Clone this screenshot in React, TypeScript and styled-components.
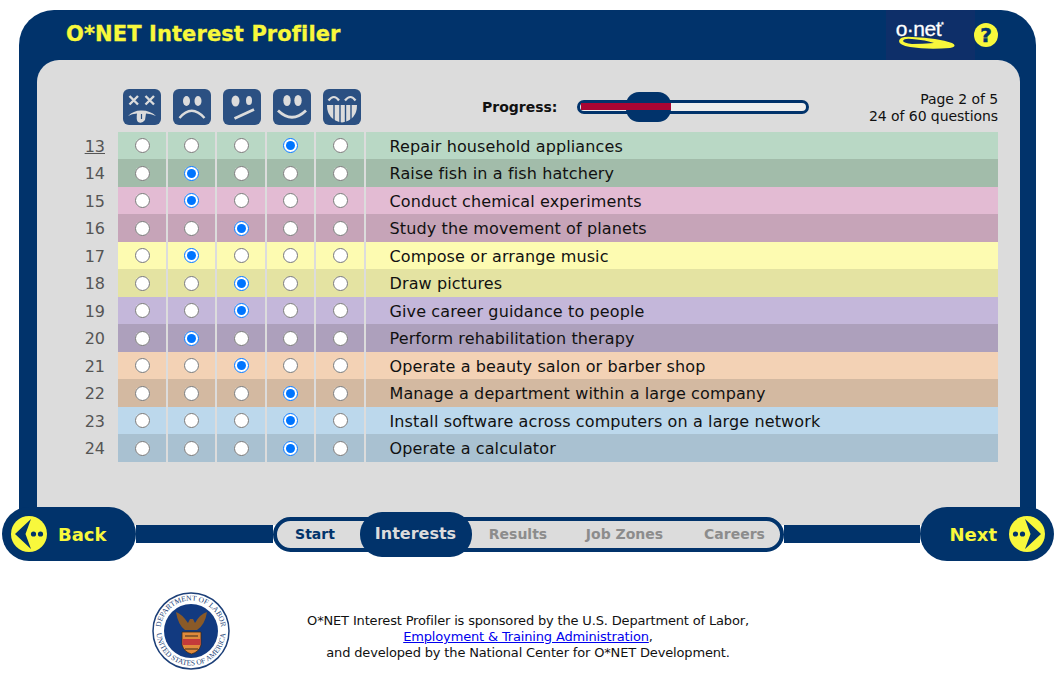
import styled, { createGlobalStyle } from "styled-components"

const NAVY = "#01336b"
const YELLOW = "#f8f83c"
const GREY = "#dcdcdc"
const ICON_BLUE = "#2b5082"

interface Question {
    num: number
    text: string
    color: string
    answer: number
}

const QUESTIONS: Question[] = [
    { num: 13, text: "Repair household appliances", color: "#b9d8c5", answer: 3 },
    { num: 14, text: "Raise fish in a fish hatchery", color: "#a2bcaa", answer: 1 },
    { num: 15, text: "Conduct chemical experiments", color: "#e3bbd3", answer: 1 },
    { num: 16, text: "Study the movement of planets", color: "#c6a4b8", answer: 2 },
    { num: 17, text: "Compose or arrange music", color: "#fdfbb1", answer: 1 },
    { num: 18, text: "Draw pictures", color: "#e4e3a2", answer: 2 },
    { num: 19, text: "Give career guidance to people", color: "#c4b7da", answer: 2 },
    { num: 20, text: "Perform rehabilitation therapy", color: "#ada0bc", answer: 1 },
    { num: 21, text: "Operate a beauty salon or barber shop", color: "#f3d2b5", answer: 2 },
    { num: 22, text: "Manage a department within a large company", color: "#d3b9a1", answer: 3 },
    { num: 23, text: "Install software across computers on a large network", color: "#bcd8ec", answer: 3 },
    { num: 24, text: "Operate a calculator", color: "#a9c1d1", answer: 3 },
]

const GlobalStyle = createGlobalStyle`
    body {
        margin: 0;
        background: #fff;
        font-family: "DejaVu Sans", Verdana, sans-serif;
    }
`

const FaceIcon = ({ kind }: { kind: number }) => (
    <svg width="38" height="36" viewBox="0 0 38 36">
        <rect width="38" height="36" rx="6" fill={ICON_BLUE} />
        <g fill={GREY} stroke="none">
            {kind === 0 && (
                <>
                    <path d="M6.500 7l8.500 8.500M15 7l-8.500 8.500M22.500 7l8.500 8.500M31 7l-8.500 8.500" stroke={GREY} strokeWidth="2.400" fill="none" />
                    <path d="M5 27Q11 21 19 21.500Q27 21.500 33 27Q28 24.500 23 24.500L22 31Q19 35 15 33Q13 31 14 24.500Q9 24.500 5 27Z" />
                    <path d="M18.500 25V30" stroke={ICON_BLUE} strokeWidth="1.200" />
                </>
            )}
            {kind === 1 && (
                <>
                    <ellipse cx="13.500" cy="12" rx="3.500" ry="5" />
                    <ellipse cx="25" cy="12" rx="3.500" ry="5" />
                    <path d="M6.500 29Q18.500 14.500 31.500 29" stroke={GREY} strokeWidth="2.400" fill="none" />
                </>
            )}
            {kind === 2 && (
                <>
                    <ellipse cx="12.500" cy="12" rx="4" ry="5.500" />
                    <ellipse cx="26" cy="11.500" rx="3" ry="4.500" />
                    <path d="M11.500 29.500L31 20.500" stroke={GREY} strokeWidth="2.800" fill="none" />
                </>
            )}
            {kind === 3 && (
                <>
                    <ellipse cx="14" cy="11.500" rx="3.700" ry="5.500" />
                    <ellipse cx="25" cy="11.500" rx="3.700" ry="5.500" />
                    <path d="M5 21.500Q19 35 33 21.500" stroke={GREY} strokeWidth="2.800" fill="none" />
                </>
            )}
            {kind === 4 && (
                <>
                    <path d="M5.500 11.500Q11 4.500 16 11.500M22 11.500Q27.500 4.500 32.500 11.500" stroke={GREY} strokeWidth="2.200" fill="none" />
                    <path d="M4 16H34Q34 31 19 33.500Q4 31 4 16Z" />
                    <path d="M11 15V33M17 15V34.500M22.500 15V34.500M28 15V33" stroke={ICON_BLUE} strokeWidth="1.400" fill="none" />
                </>
            )}
        </g>
    </svg>
)

const ArrowIcon = ({ flip }: { flip?: boolean }) => (
    <svg width="36" height="36" viewBox="0 0 36 36">
        <g transform={flip ? "matrix(-1 0 0 1 36 0)" : undefined}>
            <circle cx="18" cy="18" r="18" fill={YELLOW} />
            <path d="M4 18L20 3L14.500 18L20 33Z" fill={NAVY} />
            <circle cx="22.500" cy="18" r="2.600" fill={NAVY} />
            <circle cx="29.500" cy="18" r="2.600" fill={NAVY} />
        </g>
    </svg>
)

const Seal = () => (
    <svg width="78" height="78" viewBox="0 0 78 78">
        <defs>
            <path id="sealTop" d="M8.500 39a30.500 30.500 0 0 1 61 0" />
            <path id="sealBottom" d="M4.500 39a34.500 34.500 0 0 0 69 0" />
        </defs>
        <circle cx="39" cy="39" r="38" fill="#fff" stroke="#1c3f78" strokeWidth="1.500" />
        <circle cx="39" cy="39" r="27" fill="#123a80" />
        <text fontFamily="Liberation Serif, serif" fontSize="7.500" fill="#1c3f78" textAnchor="middle">
            <textPath href="#sealTop" startOffset="50%">DEPARTMENT OF LABOR</textPath>
        </text>
        <text fontFamily="Liberation Serif, serif" fontSize="7.500" fill="#1c3f78" textAnchor="middle">
            <textPath href="#sealBottom" startOffset="50%">UNITED STATES OF AMERICA</textPath>
        </text>
        <path d="M24 20Q30 22 36 31L38 27L41 27L43 31Q48 22 55 20Q53 33 45 38H33Q26 33 24 20Z" fill="#8a5a28" />
        <path d="M30 40H49V53Q47 60 39.500 62Q32 60 30 53Z" fill="#e08a3c" stroke="#3a2a1a" strokeWidth="0.800" />
        <rect x="30.500" y="47" width="18" height="6" fill="#c43a3a" />
        <path d="M33 44H46M33 57H46" stroke="#3a2a1a" strokeWidth="1.200" />
    </svg>
)

const App = () => (
    <Page>
        <GlobalStyle />
        <Frame>
            <Header>
                <Title>O*NET Interest Profiler</Title>
                <LogoBlock>
                    <LogoText>o·net<sup>*</sup></LogoText>
                    <Swoosh width="60" height="13" viewBox="0 0 60 13">
                        <path
                            fillRule="evenodd"
                            d="M1 5Q2 0 14 1Q40 2 54 7Q60 10 52 12Q30 14 12 11Q1 9 1 5ZM5 5Q6 7 14 8Q24 8 36 7Q28 4 14 3Q6 2 5 5Z"
                            fill={YELLOW}
                        />
                    </Swoosh>
                </LogoBlock>
                <HelpBlock>
                    <HelpCircle>?</HelpCircle>
                </HelpBlock>
            </Header>
            <Panel>
                <TopRow>
                    <Faces>
                        {[0, 1, 2, 3, 4].map((k) => <FaceIcon key={k} kind={k} />)}
                    </Faces>
                    <ProgressLabel>Progress:</ProgressLabel>
                    <Track>
                        <Fill />
                        <Knob />
                    </Track>
                    <PageInfo>
                        Page 2 of 5<br />
                        24 of 60 questions
                    </PageInfo>
                </TopRow>
                <Questions>
                    {QUESTIONS.map((q) => (
                        <Row key={q.num}>
                            <Num $link={q.num === 13}>{q.num}</Num>
                            {[0, 1, 2, 3, 4].map((i) => (
                                <RadioCell key={i} style={{ background: q.color }}>
                                    <Radio type="radio" name={`q${q.num}`} defaultChecked={q.answer === i} />
                                </RadioCell>
                            ))}
                            <TextCell style={{ background: q.color }}>{q.text}</TextCell>
                        </Row>
                    ))}
                </Questions>
            </Panel>
            <BottomRow>
                <NavPill>
                    <ArrowIcon />
                    <NavLabel>Back</NavLabel>
                </NavPill>
                <Band />
                <Tabs>
                    <Tab $width={83} $color={NAVY} $pad="0 6px 0 0">Start</Tab>
                    <ActiveTab>Interests</ActiveTab>
                    <Tab $width={93} $color="#8c8c8c">Results</Tab>
                    <Tab $width={120} $color="#8c8c8c">Job Zones</Tab>
                    <Tab $width={95} $color="#8c8c8c" $pad="0 0 0 5px">Careers</Tab>
                </Tabs>
                <Band />
                <NextPill>
                    <NavLabel>Next</NavLabel>
                    <ArrowIcon flip />
                </NextPill>
            </BottomRow>
        </Frame>
        <Footer>
            <Seal />
            <Sponsor>
                O*NET Interest Profiler is sponsored by the U.S. Department of Labor,<br />
                <a href="#eta">Employment &amp; Training Administration</a>,<br />
                and developed by the National Center for O*NET Development.
            </Sponsor>
        </Footer>
    </Page>
)

export default App

const Page = styled.div`
    width: 1060px;
    height: 690px;
    overflow: hidden;
    padding-top: 10px;
    box-sizing: border-box;
`

const Frame = styled.div`
    width: 1017px;
    height: 515px;
    margin-left: 19px;
    padding: 0 16px 0 18px;
    box-sizing: border-box;
    background: ${NAVY};
    border-radius: 35px 35px 0 0;
`

const Header = styled.header`
    height: 50px;
    display: flex;
    align-items: stretch;
    padding: 0 20px 0 29px;
`

const Title = styled.h1`
    flex: 1;
    margin: 0;
    line-height: 49px;
    font-size: 21px;
    font-weight: 700;
    letter-spacing: 0.1px;
    color: ${YELLOW};
    -webkit-text-stroke: 0.3px ${YELLOW};
`

const LogoBlock = styled.div`
    width: 89px;
    display: flex;
    flex-direction: column;
    align-items: center;
    padding-top: 9px;
    box-sizing: border-box;
    background: #0e2f69;
`

const LogoText = styled.span`
    margin-right: 22px;
    font-family: "Liberation Sans", Arial, sans-serif;
    font-size: 21px;
    line-height: 20px;
    letter-spacing: -0.5px;
    color: #fff;
    -webkit-text-stroke: 0.3px #fff;

    sup {
        font-size: 7px;
        line-height: 0;
        vertical-align: 9px;
    }
`

const Swoosh = styled.svg`
    flex-shrink: 0;
    margin: -3px 0 0 -5px;
`

const HelpBlock = styled.div`
    width: 25px;
    display: flex;
    align-items: center;
    background: #03316a;
`

const HelpCircle = styled.div`
    width: 24px;
    height: 24px;
    margin-left: -1px;
    border-radius: 50%;
    background: ${YELLOW};
    color: ${NAVY};
    font-size: 20px;
    font-weight: 700;
    line-height: 24px;
    text-align: center;
    -webkit-text-stroke: 0.5px ${NAVY};
`

const Panel = styled.main`
    height: 465px;
    padding: 29px 22px 0 0;
    box-sizing: border-box;
    background: ${GREY};
    border-radius: 22px 22px 0 0;
`

const TopRow = styled.div`
    display: flex;
    align-items: center;
    height: 36px;
    padding-left: 86px;
    margin-bottom: 7px;
`

const Faces = styled.div`
    display: flex;
    gap: 12px;
    margin-right: 121px;
`

const ProgressLabel = styled.span`
    margin-right: 20px;
    font-size: 14px;
    font-weight: 700;
    color: #111;
`

const Track = styled.div`
    position: relative;
    width: 232px;
    height: 14px;
    box-sizing: border-box;
    border: 3px solid ${NAVY};
    border-radius: 7px;
    background: #eeeeee;
`

const Fill = styled.div`
    width: 90px;
    height: 7px;
    margin-left: 1px;
    background: #a90533;
`

const Knob = styled.div`
    position: absolute;
    left: 46px;
    top: -11px;
    width: 45px;
    height: 30px;
    background: ${NAVY};
    border-radius: 13px;

    &::after {
        content: "";
        position: absolute;
        left: 0;
        right: 0;
        top: 11px;
        height: 7px;
        background: #a90533;
    }
`

const PageInfo = styled.div`
    flex: 1;
    padding-top: 2px;
    text-align: right;
    font-size: 14px;
    line-height: 17px;
    letter-spacing: -0.07px;
    color: #111;
`

const Questions = styled.div`
    display: flex;
    flex-direction: column;
`

const Row = styled.div`
    display: flex;
    height: 28px;
    gap: 2px;

    &:nth-child(odd) {
        height: 27px;
    }
`

const Num = styled.span<{ $link?: boolean }>`
    width: 68px;
    margin-right: 11px;
    text-align: right;
    font-size: 16px;
    line-height: 29px;
    color: #555;
    text-decoration: ${(p) => (p.$link ? "underline" : "none")};
`

const RadioCell = styled.div`
    width: 47.5px;
    display: flex;
    align-items: center;
    justify-content: center;
`

const Radio = styled.input`
    width: 15px;
    height: 15px;
    margin: 0 0 0 1px;
`

const TextCell = styled.div`
    flex: 1;
    padding-left: 24px;
    font-size: 16px;
    line-height: 29px;
    letter-spacing: 0.12px;
    color: #111;
`

const BottomRow = styled.nav`
    position: relative;
    display: flex;
    align-items: center;
    width: 1052px;
    height: 54px;
    margin: -18px 0 0 -35px;
`

const NavPill = styled.div`
    width: 134px;
    height: 54px;
    display: flex;
    align-items: center;
    gap: 11px;
    padding-left: 9px;
    box-sizing: border-box;
    background: ${NAVY};
    border-radius: 27px;
`

const NextPill = styled(NavPill)`
    justify-content: flex-end;
    gap: 12px;
    padding: 0 9px 0 0;
`

const NavLabel = styled.span`
    font-size: 18px;
    font-weight: 700;
    color: ${YELLOW};
`

const Band = styled.div`
    flex: 1;
    height: 18px;
    background: ${NAVY};
`

const Tabs = styled.div`
    width: 511px;
    height: 35px;
    display: flex;
    align-items: center;
    box-sizing: border-box;
    background: ${GREY};
    border: 4px solid ${NAVY};
    border-radius: 18px;
`

const Tab = styled.div<{ $width: number; $color: string; $pad?: string }>`
    width: ${(p) => p.$width}px;
    flex-shrink: 0;
    box-sizing: border-box;
    padding: ${(p) => p.$pad ?? "0"};
    text-align: center;
    font-size: 14px;
    font-weight: 700;
    color: ${(p) => p.$color};
`

const ActiveTab = styled.div`
    width: 112px;
    height: 45px;
    flex-shrink: 0;
    background: ${NAVY};
    border-radius: 22px;
    color: ${GREY};
    font-size: 16px;
    font-weight: 700;
    line-height: 43px;
    text-align: center;
`

const Footer = styled.footer`
    display: flex;
    align-items: flex-start;
    margin: 67px 0 0 152px;
`

const Sponsor = styled.p`
    width: 442px;
    margin: 21px 0 0 77px;
    text-align: center;
    font-size: 13px;
    line-height: 16px;
    letter-spacing: -0.16px;
    color: #111;
    white-space: nowrap;
`
